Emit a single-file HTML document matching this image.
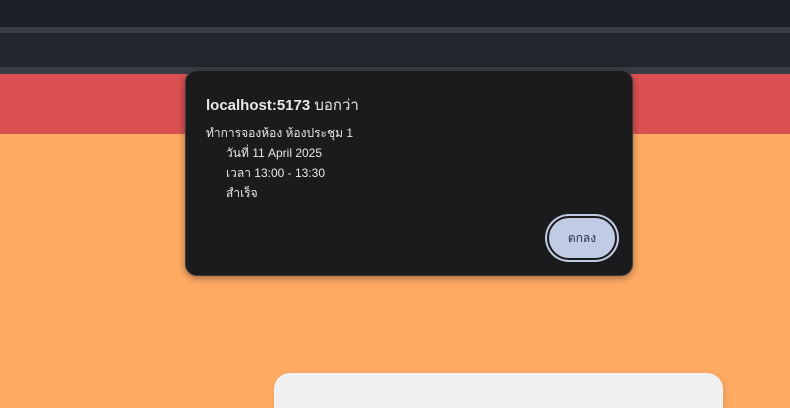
<!DOCTYPE html>
<html><head><meta charset="utf-8"><style>
*{margin:0;padding:0;box-sizing:border-box}
html,body{width:790px;height:408px;overflow:hidden}
body{background:#ffab64;position:relative;font-family:"Liberation Sans","Noto Sans CJK SC",sans-serif}
.b{position:absolute;left:0;width:790px}
.dlg{position:absolute;left:185px;top:70px;width:448px;height:206px;background:#1b1b1d;border-radius:12px;border:1px solid #3a3a3c;box-shadow:0 2px 8px rgba(0,0,0,.4);color:#e8e8e8}
.t{position:absolute;left:20px;top:22px;font-size:15px;font-weight:bold;color:#e8e8e8}
.t span{font-weight:normal}
.m{position:absolute;left:20px;top:52px;font-size:12px;line-height:20px;white-space:pre}
.btn{position:absolute;left:361px;top:145px;width:70px;height:44px;border-radius:22px;background:#c0cbe4;border:2px solid #1b1b1d;box-shadow:0 0 0 2px #c0cbe4;color:#2a2f45;font-size:12px;text-align:center;line-height:40px}
.card{position:absolute;left:274px;top:373px;width:449px;height:35px;background:#f0f0f0;border-radius:16px 16px 0 0;box-shadow:2px 2px 8px rgba(0,0,0,.1)}
</style></head><body>
<div class="b" style="top:0;height:27px;background:#1d2029"></div>
<div class="b" style="top:27px;height:6px;background:#3a3d45"></div>
<div class="b" style="top:33px;height:34px;background:#23262e"></div>
<div class="b" style="top:67px;height:7px;background:#3a3d45"></div>
<div class="b" style="top:74px;height:60px;background:#db5151"></div>
<div class="card"></div>
<div class="dlg">
<div class="t">localhost:5173 <span>บอกว่า</span></div>
<div class="m">ทำการจองห้อง ห้องประชุม 1
      วันที่ 11 April 2025
      เวลา 13:00 - 13:30
      สำเร็จ</div>
<div class="btn">ตกลง</div>
</div>
</body></html>
